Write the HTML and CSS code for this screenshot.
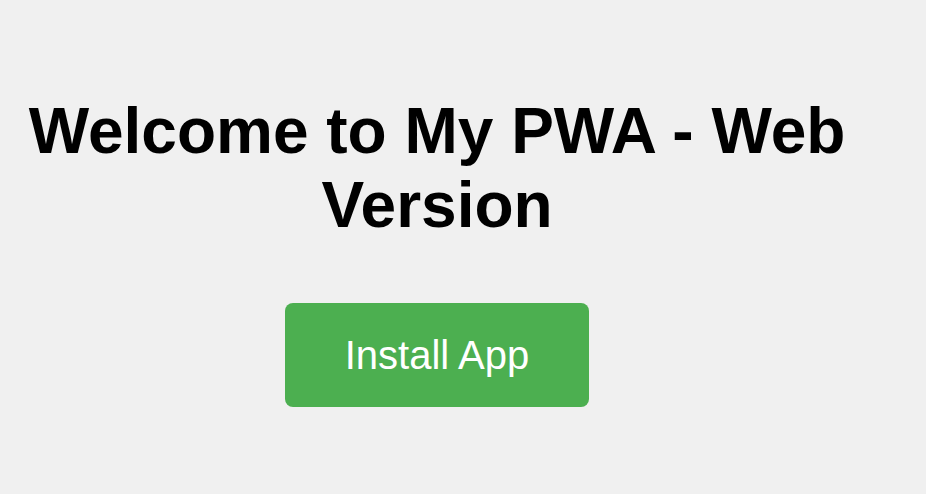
FILE: index.html
```html
<!DOCTYPE html>
<html lang="en">
<head>
<meta charset="utf-8">
<title>My PWA</title>
<link rel="stylesheet" href="styles.css">
</head>
<body>
<main class="page">
  <h1 class="title">Welcome to My PWA - Web Version</h1>
  <button class="install-btn" type="button">Install App</button>
</main>
</body>
</html>
```
FILE: styles.css
```css
html, body {
  margin: 0;
  padding: 0;
  background: #f0f0f0;
}
body {
  font-family: "Liberation Sans", Arial, Helvetica, sans-serif;
  color: #000;
}
.page {
  width: 874px;
  display: flex;
  flex-direction: column;
  align-items: center;
  text-align: center;
  padding-top: 95px;
}
.title {
  margin: 0;
  font-size: 64px;
  font-weight: bold;
  line-height: 1.15;
}
.install-btn {
  margin-top: 61px;
  font-family: inherit;
  font-size: 40px;
  line-height: 46px;
  color: #fff;
  background: #4caf50;
  border: none;
  border-radius: 8px;
  padding: 29px 58px;
  width: 304px;
  cursor: pointer;
}
```
